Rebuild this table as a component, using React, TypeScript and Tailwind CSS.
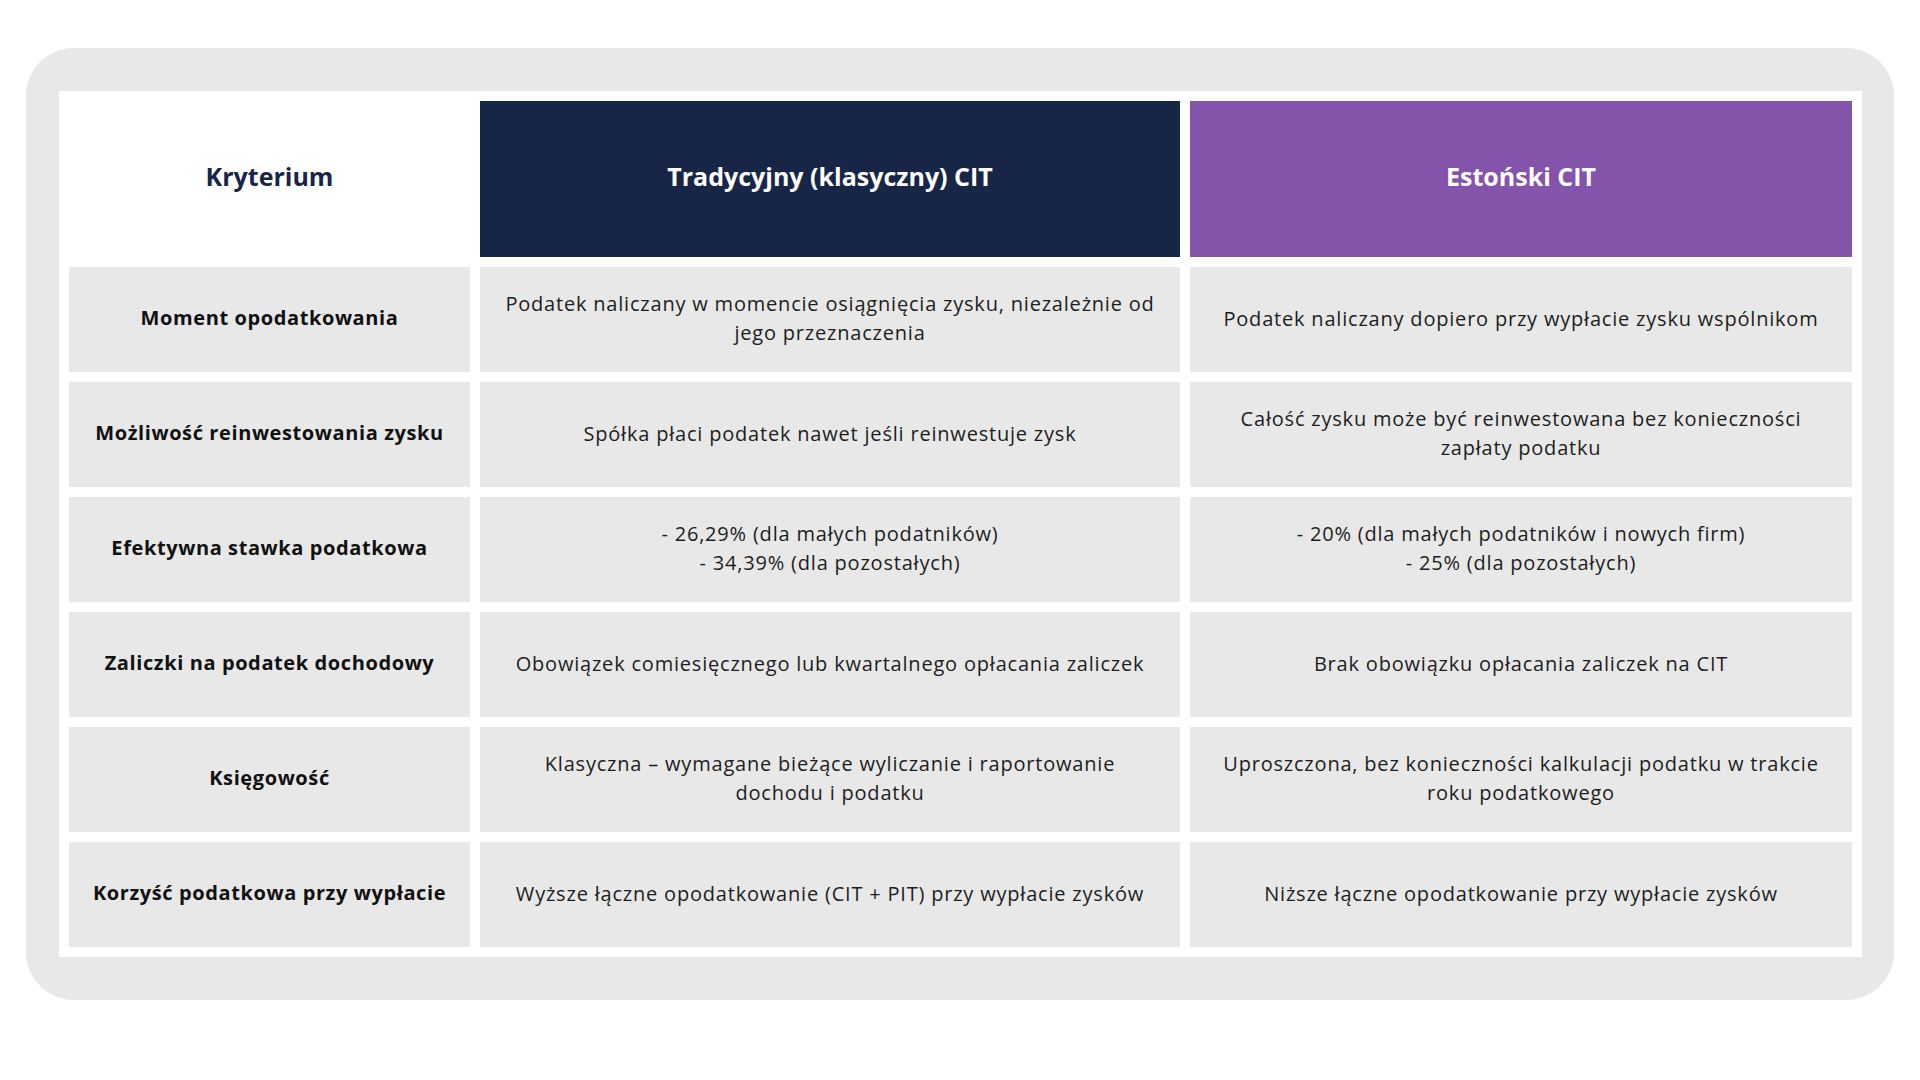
const rows = [
  {
    label: "Moment opodatkowania",
    classic: "Podatek naliczany w momencie osiągnięcia zysku, niezależnie od jego przeznaczenia",
    estonian: "Podatek naliczany dopiero przy wypłacie zysku wspólnikom",
  },
  {
    label: "Możliwość reinwestowania zysku",
    classic: "Spółka płaci podatek nawet jeśli reinwestuje zysk",
    estonian: "Całość zysku może być reinwestowana bez konieczności zapłaty podatku",
  },
  {
    label: "Efektywna stawka podatkowa",
    classic: ["- 26,29% (dla małych podatników)", "- 34,39% (dla pozostałych)"],
    estonian: ["- 20% (dla małych podatników i nowych firm)", "- 25% (dla pozostałych)"],
  },
  {
    label: "Zaliczki na podatek dochodowy",
    classic: "Obowiązek comiesięcznego lub kwartalnego opłacania zaliczek",
    estonian: "Brak obowiązku opłacania zaliczek na CIT",
  },
  {
    label: "Księgowość",
    classic: "Klasyczna – wymagane bieżące wyliczanie i raportowanie dochodu i podatku",
    estonian: "Uproszczona, bez konieczności kalkulacji podatku w trakcie roku podatkowego",
  },
  {
    label: "Korzyść podatkowa przy wypłacie",
    classic: "Wyższe łączne opodatkowanie (CIT + PIT) przy wypłacie zysków",
    estonian: "Niższe łączne opodatkowanie przy wypłacie zysków",
  },
];

function Cell({ value }: { value: string | string[] }) {
  // multi-line values are rendered as separate lines
  const lines = Array.isArray(value) ? value : [value];
  return (
    <div className="h-[105px] bg-[#e8e8e8] flex flex-col items-center justify-center px-[24px] pb-[3px] text-center text-[20px] leading-[29px] tracking-[0.8px] font-normal text-[#1d1d1d]">
      {lines.map((l) => (
        <span key={l}>{l}</span>
      ))}
    </div>
  );
}

export default function App() {
  return (
    <div
      className="min-h-screen w-full bg-white pt-[48px] pl-[26px]"
      style={{ fontFamily: '"Open Sans", "Noto Sans", sans-serif' }}
    >
      <div className="w-[1868px] rounded-[48px] bg-[#e8e8e8] pt-[43px] pb-[43px] pl-[33px] pr-[32px]">
        <div className="bg-white p-[10px]">
          <div className="grid grid-cols-[401px_700px_1fr] gap-[10px]">
            <div className="h-[156px] pb-[5px] flex items-center justify-center text-[25px] font-bold text-[#172546]">
              Kryterium
            </div>
            <div className="h-[156px] pb-[5px] bg-[#172546] flex items-center justify-center text-[25px] font-bold text-white">
              Tradycyjny (klasyczny) CIT
            </div>
            <div className="h-[156px] pb-[5px] bg-[#8454aa] flex items-center justify-center text-[25px] font-bold text-white">
              Estoński CIT
            </div>

            {rows.map((r) => (
              <div key={r.label} className="contents">
                <div className="h-[105px] pb-[3px] bg-[#e8e8e8] flex items-center justify-center px-[12px] text-center text-[20px] tracking-[0.6px] font-bold text-[#111111]">
                  {r.label}
                </div>
                <Cell value={r.classic} />
                <Cell value={r.estonian} />
              </div>
            ))}
          </div>
        </div>
      </div>
    </div>
  );
}
